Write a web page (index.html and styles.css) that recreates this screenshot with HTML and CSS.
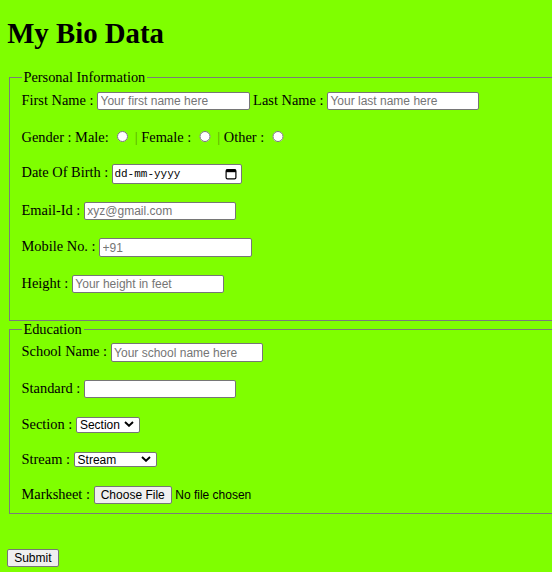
FILE: index.html
```html
<!DOCTYPE html>
<html lang="en">
<head>
<meta charset="utf-8">
<title>My Bio Data</title>
<link rel="stylesheet" href="styles.css">
</head>
<body>
<h1 class="title">My Bio Data</h1>
<form class="bio-form">
  <fieldset class="group">
    <legend class="group-title">Personal Information</legend>
    <div class="row">First Name : <input class="field" type="text" placeholder="Your first name here"> Last Name : <input class="field" type="text" placeholder="Your last name here"></div>
    <div class="row">Gender : Male: <input class="radio" type="radio" name="gender"> <span class="sep">|</span> Female : <input class="radio" type="radio" name="gender"> <span class="sep">|</span> Other : <input class="radio" type="radio" name="gender"></div>
    <div class="row">Date Of Birth : <span class="date-wrap"><input class="field date-field" type="text" placeholder="dd-mm-yyyy"><svg class="date-icon" width="12" height="12" viewBox="0 0 12 12" aria-hidden="true"><rect x="1.1" y="1.6" width="9.8" height="9.3" rx="1.4" fill="none" stroke="#000" stroke-width="1.2"/><rect x="1.1" y="1.6" width="9.8" height="2.6" fill="#000"/></svg></span></div>
    <div class="row">Email-Id : <input class="field" type="email" placeholder="xyz@gmail.com"></div>
    <div class="row">Mobile No. : <input class="field" type="tel" placeholder="+91"></div>
    <div class="row">Height : <input class="field" type="text" placeholder="Your height in feet"></div>
  </fieldset>
  <fieldset class="group">
    <legend class="group-title">Education</legend>
    <div class="row">School Name : <input class="field" type="text" placeholder="Your school name here"></div>
    <div class="row">Standard : <input class="field" type="text"></div>
    <div class="row">Section : <span class="select-wrap"><select class="select select--section"><option>Section</option><option>A</option><option>B</option><option>C</option></select><svg class="select-arrow" width="10" height="6" viewBox="0 0 10 6" aria-hidden="true"><path d="M1 1l4 3.8L9 1" fill="none" stroke="#000" stroke-width="1.9"/></svg></span></div>
    <div class="row">Stream : <span class="select-wrap"><select class="select select--stream"><option>Stream</option><option>Science</option><option>Commerce</option><option>Arts</option></select><svg class="select-arrow" width="10" height="6" viewBox="0 0 10 6" aria-hidden="true"><path d="M1 1l4 3.8L9 1" fill="none" stroke="#000" stroke-width="1.9"/></svg></span></div>
    <div class="row row--last">Marksheet : <input class="file" type="file"></div>
  </fieldset>
  <div class="actions"><input class="submit" type="submit" value="Submit"></div>
</form>
</body>
</html>
```
FILE: styles.css
```css
html {
  overflow: hidden;
  background: #7fff00;
}

body {
  margin: 0;
  padding: 0 7.2px;
  background: #7fff00;
  color: #000;
  font-family: "Liberation Serif", "Times New Roman", serif;
  font-size: 14.4px;
  line-height: normal;
}

.title {
  margin: 17.2px 0 19.3px;
  font-size: 28.8px;
  font-weight: bold;
}

.bio-form {
  margin: 0;
}

.group {
  width: 620px;
  min-width: 0;
  margin: 0 1.8px;
  padding: 5.04px 11.6px 9.2px;
  border: 1px solid #7b7b7b;
}

.group-title {
  padding: 0 1.8px;
}

.row {
  margin-bottom: 17.8px;
  white-space: nowrap;
}

.row--last {
  margin-bottom: 0;
}

.field {
  box-sizing: border-box;
  width: 152.4px;
  height: 18.6px;
  margin: 0;
  padding: 0 2.4px;
  border: 1px solid #767676;
  border-radius: 2px;
  background: #fff;
  color: #000;
  font: 12px "Liberation Sans", Arial, sans-serif;
  outline: none;
}

.field::placeholder {
  color: #757575;
}

.radio {
  width: 11.7px;
  height: 11.7px;
  margin: 2.7px 2.7px 0 4.5px;
}

.sep {
  color: #55a800;
}

.date-wrap {
  position: relative;
  display: inline-block;
}

.date-field {
  width: 129.6px;
  height: 20px;
  padding: 0 18px 0 1.5px;
  font: 11px "Liberation Mono", "Courier New", monospace;
}

.date-field::placeholder {
  color: #000;
}

.date-icon {
  position: absolute;
  right: 4.6px;
  top: 4.2px;
  pointer-events: none;
}

.select-wrap {
  position: relative;
  display: inline-block;
}

.select {
  appearance: none;
  -webkit-appearance: none;
  box-sizing: border-box;
  height: 15.6px;
  margin: 0;
  padding: 0 0 0 3px;
  border: 1px solid #767676;
  border-radius: 2px;
  background: #fff;
  color: #000;
  font: 12px "Liberation Sans", Arial, sans-serif;
}

.select--section {
  width: 64.4px;
}

.select--stream {
  width: 83px;
}

.select-arrow {
  position: absolute;
  right: 6px;
  top: 5px;
  pointer-events: none;
}

.file {
  color: #000;
  font: 12px "Liberation Sans", Arial, sans-serif;
}

.file::file-selector-button {
  margin: 0 3.3px 0 0;
  padding: 1.2px 6.2px;
  border: 1px solid #767676;
  border-radius: 2px;
  background: #efefef;
  color: #000;
  font: inherit;
}

.actions {
  margin-top: 34.6px;
}

.submit {
  margin: 0;
  padding: 1.2px 6px;
  border: 1px solid #767676;
  border-radius: 2px;
  background: #efefef;
  color: #000;
  font: 12px "Liberation Sans", Arial, sans-serif;
}
```
